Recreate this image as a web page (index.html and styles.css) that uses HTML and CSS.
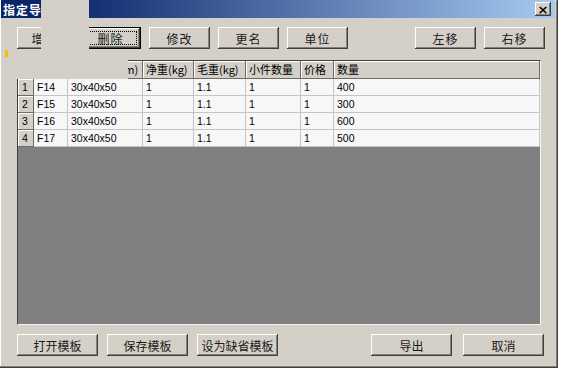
FILE: index.html
```html
<!DOCTYPE html>
<html lang="zh-CN">
<head>
    <meta charset="UTF-8">
    <title>指定导出模板</title>
    <link rel="stylesheet" href="styles.css">
</head>
<body>

    <div class="window">
        <div class="titlebar">
            <span class="title">指定导出模板</span>
            <button class="close">×</button>
        </div>

        <div class="toolbar">
            <button class="btn btn-add">增加</button>
            <button class="btn btn-default">删除</button>
            <button class="btn">修改</button>
            <button class="btn">更名</button>
            <button class="btn">单位</button>
            <button class="btn btn-left">左移</button>
            <button class="btn">右移</button>
        </div>

        <div class="grid">
            <div class="sheet">
                <div class="head"></div>
                <div class="head">编号</div>
                <div class="head">外形尺寸(cm)</div>
                <div class="head">净重(kg)</div>
                <div class="head">毛重(kg)</div>
                <div class="head">小件数量</div>
                <div class="head">价格</div>
                <div class="head">数量</div>

                <div class="num">1</div>
                <div class="cell">F14</div>
                <div class="cell">30x40x50</div>
                <div class="cell">1</div>
                <div class="cell">1.1</div>
                <div class="cell">1</div>
                <div class="cell">1</div>
                <div class="cell">400</div>

                <div class="num">2</div>
                <div class="cell">F15</div>
                <div class="cell">30x40x50</div>
                <div class="cell">1</div>
                <div class="cell">1.1</div>
                <div class="cell">1</div>
                <div class="cell">1</div>
                <div class="cell">300</div>

                <div class="num">3</div>
                <div class="cell">F16</div>
                <div class="cell">30x40x50</div>
                <div class="cell">1</div>
                <div class="cell">1.1</div>
                <div class="cell">1</div>
                <div class="cell">1</div>
                <div class="cell">600</div>

                <div class="num">4</div>
                <div class="cell">F17</div>
                <div class="cell">30x40x50</div>
                <div class="cell">1</div>
                <div class="cell">1.1</div>
                <div class="cell">1</div>
                <div class="cell">1</div>
                <div class="cell">500</div>
            </div>
        </div>

        <div class="footer">
            <button class="btn btn-wide">打开模板</button>
            <button class="btn btn-wide">保存模板</button>
            <button class="btn btn-wide">设为缺省模板</button>
            <button class="btn btn-wide btn-export">导出</button>
            <button class="btn btn-wide">取消</button>
        </div>

        <!-- leftover of a window that was not repainted -->
        <div class="ghost ghost-top"></div>
        <div class="ghost ghost-low"></div>
        <span class="mark"></span>
    </div>

</body>
</html>
```

FILE: styles.css
```css
body {
    margin: 0;
    background-color: #ffffff;
    font-family: "Noto Sans CJK SC", sans-serif;
}

.window {
    position: relative;
    width: 558px;
    height: 368px;
    box-sizing: border-box;
    padding: 0 3px 0 1px;
    background-color: #d4d0c8; /* classic dialog grey */
    box-shadow: inset -1px -1px #404040, inset -2px -2px #808080, inset 1px 1px #ffffff;
    display: flex;
    flex-direction: column;
}

.titlebar {
    height: 18px;
    padding-left: 2px;
    padding-right: 4px;
    background: linear-gradient(90deg, #0a246a 10%, #a6caf0);
    display: flex;
    align-items: center;
    justify-content: space-between;
}

.title {
    color: #ffffff;
    font-size: 12px;
    font-weight: bold;
    letter-spacing: 1px;
}

.close {
    width: 16px;
    height: 14px;
    padding: 0;
    border: none;
    background-color: #d4d0c8;
    box-shadow: inset -1px -1px #404040, inset 1px 1px #ffffff, inset -2px -2px #808080;
    font-family: "DejaVu Sans", sans-serif;
    font-size: 13px;
    font-weight: bold;
    line-height: 13px;
    color: #000000;
}

/* Buttons */
.btn {
    position: relative;
    height: 22px;
    width: 61px;
    padding: 0;
    border: none;
    background-color: #d4d0c8;
    box-shadow: inset -1px -1px #404040, inset 1px 1px #ffffff, inset -2px -2px #808080;
    font-family: "Noto Sans CJK SC", sans-serif;
    font-size: 12px;
    color: #1a1a1a;
}

.btn-add {
    width: 55px;
}

.btn-default {
    box-shadow: inset 0 0 0 1px #000000, inset -2px -2px #404040, inset 2px 2px #ffffff, inset -3px -3px #808080;
}

.btn-default::after {
    content: "";
    position: absolute;
    top: 4px;
    left: 4px;
    right: 4px;
    bottom: 4px;
    border: 1px dotted #000000;
}

.btn-left {
    margin-left: auto;
}

.toolbar {
    display: flex;
    gap: 8px;
    margin-top: 9px;
    padding-left: 16px;
    padding-right: 10px;
}

.toolbar .btn {
    letter-spacing: 1px;
}

/* Table */
.grid {
    width: 524px;
    height: 265px;
    box-sizing: border-box;
    margin-top: 11px;
    margin-left: 16px;
    background-color: #808080;
    border: 1px solid;
    border-color: #404040 #f4f4f4 #f4f4f4 #404040;
}

.sheet {
    display: grid;
    grid-template-columns: 16px 34px 75px 51px 52px 55px 33px 1fr;
    grid-template-rows: 18px;
    grid-auto-rows: 17px;
}

.head,
.num {
    box-sizing: border-box;
    background-color: #d4d0c8;
    border-right: 1px solid #6a6a6a;
    border-bottom: 1px solid #6a6a6a;
    box-shadow: inset 1px 1px #ffffff;
    white-space: nowrap;
    overflow: hidden;
}

.head {
    padding-left: 3px;
    font-size: 11px;
    line-height: 17px;
}

.num {
    padding-left: 4px;
    font-family: "Liberation Sans", sans-serif;
    font-size: 10.5px;
    line-height: 16px;
}

.cell {
    box-sizing: border-box;
    padding-left: 3px;
    background-color: #f7f7f7;
    border-right: 1px solid #c4c4c4;
    border-bottom: 1px solid #c4c4c4;
    font-family: "Liberation Sans", sans-serif;
    font-size: 10.5px;
    line-height: 16px;
    white-space: nowrap;
}

.footer {
    display: flex;
    gap: 9px;
    margin-top: 9px;
    padding-left: 16px;
    padding-right: 11px;
}

.btn-wide {
    width: 81px;
}

.btn-export {
    margin-left: auto;
    margin-right: 2px;
}

/* Stale grey patch over the corner */
.ghost {
    position: absolute;
    background-color: #d4d0c8;
}

.ghost-top {
    left: 41px;
    top: 0;
    width: 48px;
    height: 50px;
}

.ghost-low {
    left: 10px;
    top: 49px;
    width: 118px;
    height: 30px;
}

.mark {
    position: absolute;
    left: 5px;
    top: 50px;
    width: 3px;
    height: 7px;
    background-color: #f2c200;
}
```
